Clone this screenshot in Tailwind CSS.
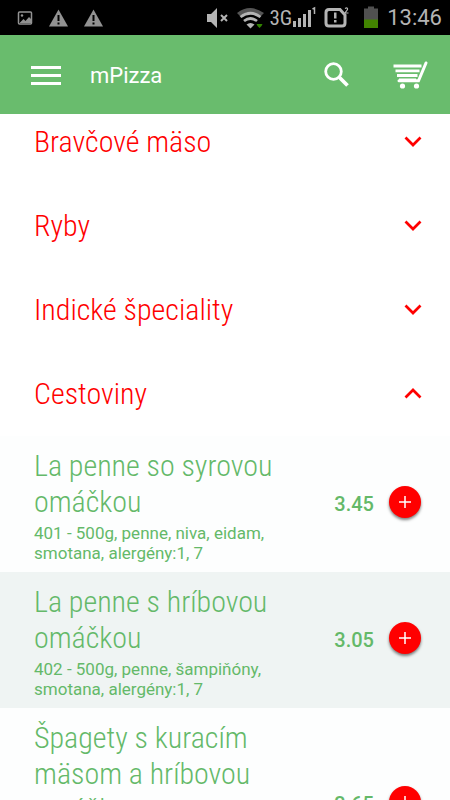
<!DOCTYPE html>
<html lang="sk">
<head>
<meta charset="utf-8">
<meta name="viewport" content="width=device-width, initial-scale=1">
<title>mPizza</title>
<script src="https://cdn.jsdelivr.net/npm/@tailwindcss/browser@4"></script>
</head>
<body class="flex h-screen flex-col overflow-hidden bg-white font-['Roboto',sans-serif]">
<div class="flex h-[35px] shrink-0 items-center justify-between bg-black pr-2 pl-[17px] text-[#b4b4b4]">
  <div class="flex items-center gap-4 text-[#929292]">
    <svg class="h-4 w-4" viewBox="0 0 16 16"><rect x="1.500" y="2" width="13" height="12" rx="1" fill="none" stroke="currentColor" stroke-width="1.500"/><circle cx="5" cy="5.500" r="1.200" fill="currentColor"/><path d="M3 12.500 6.500 9l2 2L12 7l2 2v4H3z" fill="currentColor"/></svg>
    <svg class="h-[18px] w-[19px]" viewBox="0 0 19 18"><path d="M9.500 0.500 19 17.500H0z" fill="currentColor"/><path d="M8.500 6h2v6h-2zM8.500 13.500h2v2h-2z" fill="#000"/></svg>
    <svg class="h-[18px] w-[19px]" viewBox="0 0 19 18"><path d="M9.500 0.500 19 17.500H0z" fill="currentColor"/><path d="M8.500 6h2v6h-2zM8.500 13.500h2v2h-2z" fill="#000"/></svg>
  </div>
  <div class="flex items-center">
    <svg class="mr-2 h-6 w-[23px]" viewBox="0 0 23 24"><path d="M1 8h4l6-6v20l-6-6H1z" fill="currentColor"/><path d="m15 9 6 6m0-6-6 6" stroke="currentColor" stroke-width="2" fill="none"/></svg>
    <svg class="mr-1 h-6 w-7" viewBox="0 0 28 24"><path d="M0 7Q13-3 27 7L24 10Q13 2 3 10z" fill="#555"/><path d="M3.500 11q10-7.500 20 0M7 15q6.500-5 13 0" fill="none" stroke="currentColor" stroke-width="2.800"/><path d="M9.500 18.500q4-3 8 0l-4 4z" fill="currentColor"/><path d="M19.500 18h6l-1 2-2 2-2-2z" fill="#328400"/></svg>
    <span class="font-['Roboto_Condensed','Roboto',sans-serif] text-[21px] leading-6 font-normal">3G</span>
    <svg class="mr-2 h-6 w-6" viewBox="0 0 24 24"><path d="M1 15h3v6H1zM6 12h3v9H6zM11 8h3v13h-3zM16 4h3v17h-3z" fill="currentColor"/><path d="m20.500 3 2-1v6" fill="none" stroke="currentColor" stroke-width="1.500"/></svg>
    <svg class="mr-[14px] h-6 w-[25px]" viewBox="0 0 25 24"><path d="M5 3.500h11l5 5.500v8q0 3-3 3H5q-3 0-3-3V6.500q0-3 3-3z" fill="none" stroke="currentColor" stroke-width="3"/><path d="M10 6.500h2.500v6H10zM10 14h2.500v2.500H10z" fill="currentColor"/><path d="M21 2.500q3-1.500 2.500 1L21 7h3.500" fill="none" stroke="currentColor" stroke-width="1.200"/></svg>
    <svg class="mr-2 h-6 w-4" viewBox="0 0 16 24"><path d="M5 0.500h6v2h4V14H1V2.500h4z" fill="#505050"/><path d="M1 13.500h14V22H1z" fill="#428400"/></svg>
    <time class="text-[22px] leading-6" datetime="13:46">13:46</time>
  </div>
</div>
<header class="flex h-[79px] shrink-0 items-center bg-[#69bc6d] pt-0.5 pr-[22px] pl-[30px] text-white">
  <button type="button" aria-label="Menu" class="h-8 w-8"><svg class="h-8 w-8" viewBox="0 0 32 32"><path d="M1 7.500h30M1 15.500h30M1 23.500h30" stroke="currentColor" stroke-width="3"/></svg></button>
  <h1 class="ml-7 flex-1 text-[22px] leading-8">mPizza</h1>
  <button type="button" aria-label="Hľadať" class="mr-10 h-8 w-8"><svg class="h-8 w-8" viewBox="0 0 32 32" fill="none" stroke="currentColor"><circle cx="13.500" cy="11.500" r="7.800" stroke-width="2.800"/><path d="m19.500 17.500 8 8" stroke-width="3.800"/></svg></button>
  <button type="button" aria-label="Košík" class="h-8 w-9"><svg class="h-8 w-9" viewBox="0 0 36 32" fill="none" stroke="currentColor"><path d="M1.500 6H29.500M3.500 10.800h24M5 15.500h20.500M7 20h17" stroke-width="2.800"/><path d="M34 3 26.500 20.800H7" stroke-width="3" stroke-linecap="round"/><g fill="currentColor" stroke="none"><circle cx="10.500" cy="26" r="2.600"/><circle cx="24.500" cy="26" r="2.600"/></g></svg></button>
</header>
<main class="min-h-0 flex-1 overflow-y-auto bg-[#fdfefe] [scrollbar-width:none]">
  <div class="flex flex-col gap-7 bg-white pb-[14px] font-['Roboto_Condensed','Roboto',sans-serif] text-[30px] leading-9 font-light text-[#ff0000]">
    <button type="button" aria-expanded="false" class="flex h-14 items-center justify-between pr-[25px] pl-[34px] text-left">Bravčové mäso<svg class="h-6 w-6" viewBox="0 0 24 24"><path d="m4.500 7.500 7.500 7.500 7.500-7.500" fill="none" stroke="currentColor" stroke-width="2.700"/></svg></button>
    <button type="button" aria-expanded="false" class="flex h-14 items-center justify-between pr-[25px] pl-[34px] text-left">Ryby<svg class="h-6 w-6" viewBox="0 0 24 24"><path d="m4.500 7.500 7.500 7.500 7.500-7.500" fill="none" stroke="currentColor" stroke-width="2.700"/></svg></button>
    <button type="button" aria-expanded="false" class="flex h-14 items-center justify-between pr-[25px] pl-[34px] text-left">Indické špeciality<svg class="h-6 w-6" viewBox="0 0 24 24"><path d="m4.500 7.500 7.500 7.500 7.500-7.500" fill="none" stroke="currentColor" stroke-width="2.700"/></svg></button>
    <button type="button" aria-expanded="true" class="flex h-14 items-center justify-between pr-[25px] pl-[34px] text-left">Cestoviny<svg class="h-6 w-6" viewBox="0 0 24 24"><path d="m4.500 15.500 7.500-7.500 7.500 7.500" fill="none" stroke="currentColor" stroke-width="2.700"/></svg></button>
  </div>
  <ul class="text-[#64b969]">
    <li class="flex items-center justify-between pt-3 pr-[29px] pb-[9px] pl-[34px]">
      <div class="w-[256px]">
        <h2 class="font-['Roboto_Condensed','Roboto',sans-serif] text-[30px] leading-9 font-light">La penne so syrovou omáčkou</h2>
        <p class="pt-[3px] text-[17px] leading-5">401 - 500g, penne, niva, eidam, smotana, alergény:1, 7</p>
      </div>
      <div class="mb-1 flex items-center gap-[15px]">
        <span class="text-xl font-medium">3.45</span>
        <button type="button" aria-label="Pridať La penne so syrovou omáčkou" class="mb-1 flex h-8 w-8 items-center justify-center rounded-full bg-[#ff0000] text-white shadow-[0_2px_3px_rgb(0_0_0/0.5)]"><svg class="h-3 w-3" viewBox="0 0 12 12"><path d="M6 0v12M0 6h12" stroke="currentColor" stroke-width="1.500"/></svg></button>
      </div>
    </li>
    <li class="flex items-center justify-between bg-[#eff4f3] pt-3 pr-[29px] pb-[9px] pl-[34px]">
      <div class="w-[256px]">
        <h2 class="font-['Roboto_Condensed','Roboto',sans-serif] text-[30px] leading-9 font-light">La penne s hríbovou omáčkou</h2>
        <p class="pt-[3px] text-[17px] leading-5">402 - 500g, penne, šampiňóny, smotana, alergény:1, 7</p>
      </div>
      <div class="mb-1 flex items-center gap-[15px]">
        <span class="text-xl font-medium">3.05</span>
        <button type="button" aria-label="Pridať La penne s hríbovou omáčkou" class="mb-1 flex h-8 w-8 items-center justify-center rounded-full bg-[#ff0000] text-white shadow-[0_2px_3px_rgb(0_0_0/0.5)]"><svg class="h-3 w-3" viewBox="0 0 12 12"><path d="M6 0v12M0 6h12" stroke="currentColor" stroke-width="1.500"/></svg></button>
      </div>
    </li>
    <li class="flex min-h-48 items-center justify-between pt-3 pr-[29px] pb-[9px] pl-[34px]">
      <div class="w-[256px] self-start">
        <h2 class="font-['Roboto_Condensed','Roboto',sans-serif] text-[30px] leading-9 font-light">Špagety s kuracím mäsom a hríbovou omáčkou</h2>
      </div>
      <div class="mb-1 flex items-center gap-[15px]">
        <span class="text-xl font-medium">3.65</span>
        <button type="button" aria-label="Pridať Špagety s kuracím mäsom a hríbovou omáčkou" class="mb-1 flex h-8 w-8 items-center justify-center rounded-full bg-[#ff0000] text-white shadow-[0_2px_3px_rgb(0_0_0/0.5)]"><svg class="h-3 w-3" viewBox="0 0 12 12"><path d="M6 0v12M0 6h12" stroke="currentColor" stroke-width="1.500"/></svg></button>
      </div>
    </li>
  </ul>
</main>
</body>
</html>
